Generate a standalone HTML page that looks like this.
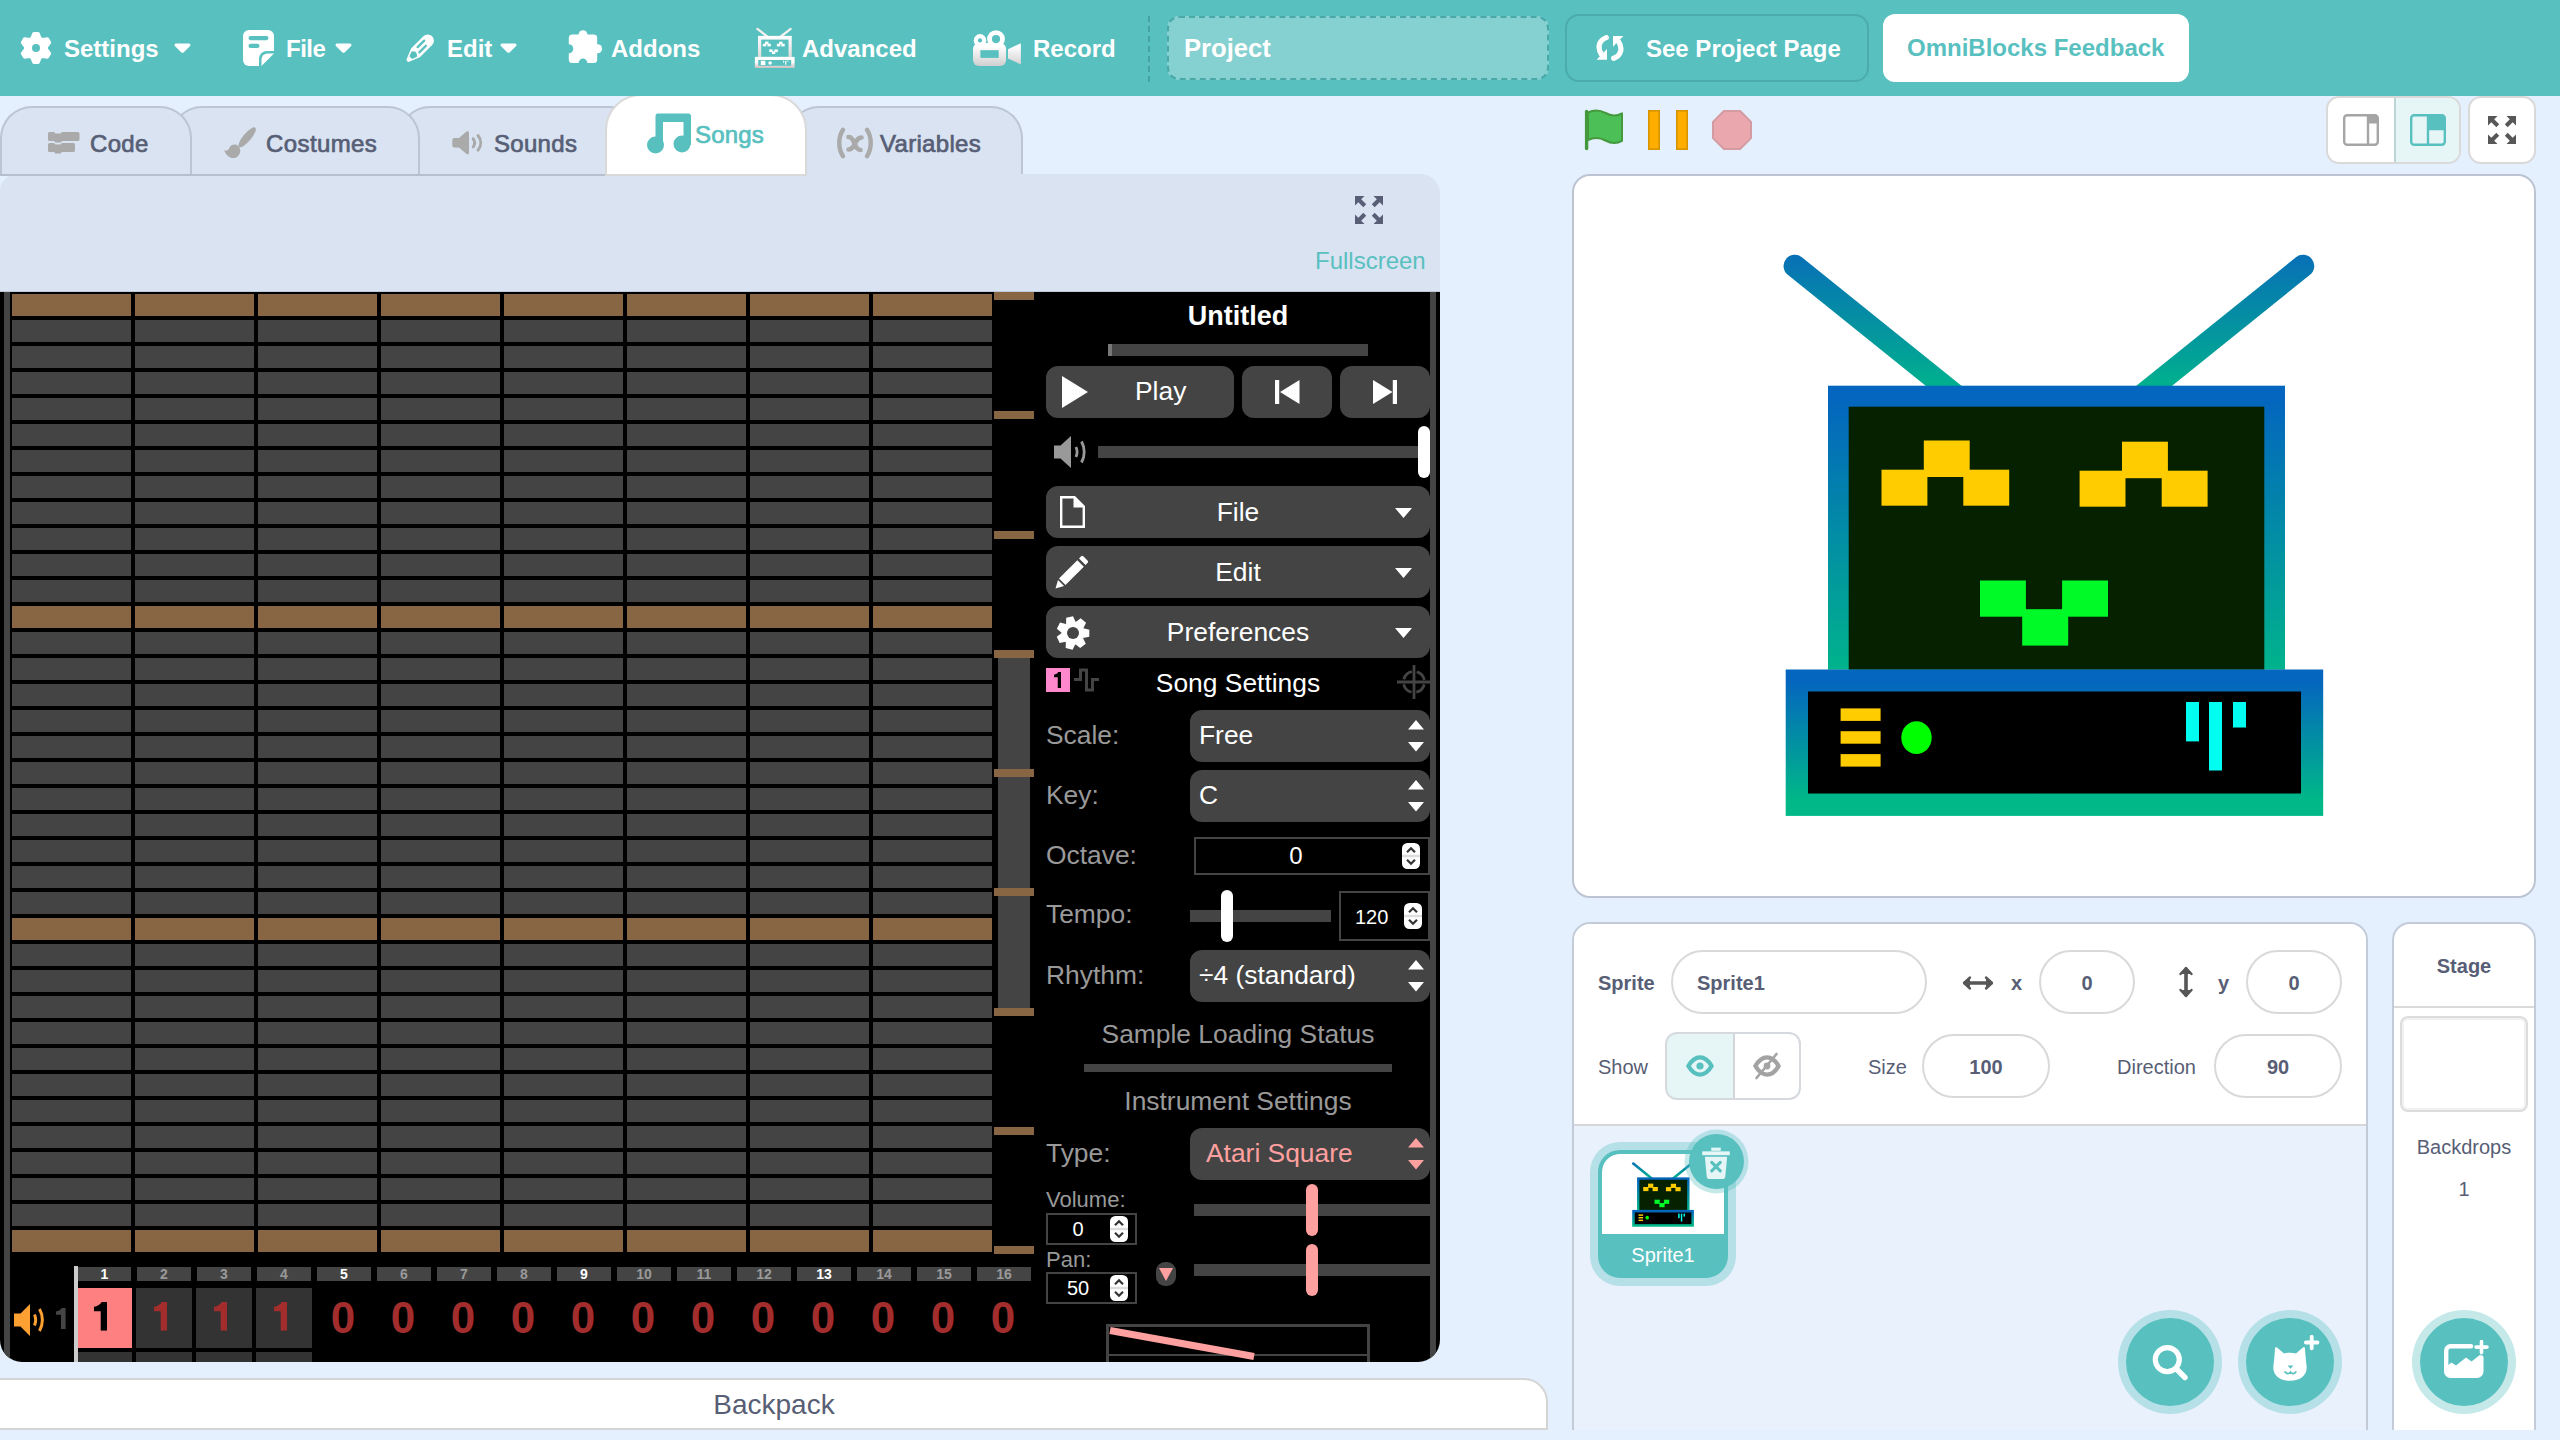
<!DOCTYPE html>
<html lang="en">
<head>
<meta charset="utf-8">
<title>OmniBlocks - Songs</title>
<style>
*{box-sizing:border-box;margin:0;padding:0}
html,body{width:2560px;height:1440px;overflow:hidden}
body{background:#e5f0ff;font-family:"Liberation Sans",sans-serif;color:#575e75;position:relative}
.a{position:absolute}
.t{position:absolute;white-space:nowrap;line-height:1}
.b{font-weight:bold}
.w{color:#fff}
.teal{color:#59c0c0}
/* ---------- menu bar ---------- */
#bar{left:0;top:0;width:2560px;height:96px;background:#59c0c0;z-index:5}
.mi{font-size:24px;font-weight:bold;color:#fff;top:37px}
/* ---------- tabs ---------- */
.tab{top:106px;height:68px;background:#d9e3f2;border:2px solid #bcc5d3;border-bottom:none;border-radius:32px 32px 0 0}
.tl{font-size:24px;top:132px;color:#575e75;-webkit-text-stroke:0.7px #575e75;letter-spacing:0.3px}
/* ---------- editor ---------- */
#edhead{left:0;top:174px;width:1440px;height:119px;background:#d9e3f2;border-radius:17px 20px 0 0}
#ed{left:0;top:292px;width:1440px;height:1070px;background:#000;border-radius:0 0 22px 22px;overflow:hidden}
#ed .a,#ed .t{position:absolute}
.btn{background:#444;border-radius:12px}
.lab{font-size:26.400px;color:#999}
.sel{background:#444;border-radius:12px;height:52px;left:1190px;width:240px}
.selt{font-size:26.400px;color:#fff}
.num{border:2px solid #444;background:#000}
.bn{top:975px;width:54px;height:14px;background:#444;font-size:14px;font-weight:bold;color:#999;text-align:center;line-height:15px}
.bn.h{color:#fff}
.pc{top:996px;width:56px;height:60px;font-size:44px;font-weight:bold;color:#a32d2d;text-align:center;line-height:59px;padding-right:2px}
.pc.d{background:#333}
.pc2{top:1060px;width:56px;height:12px;background:#333}
/* ---------- right side ---------- */
.pill{border:2px solid #d9d9d9;border-radius:32px;background:#fff;height:64px;font-size:24px;font-weight:bold;color:#575e75;text-align:center;line-height:62px}
.sl{font-size:24px;color:#575e75}
.circ{border-radius:50%;background:#59c0c0;box-shadow:0 0 0 8px rgba(89,192,192,.35)}
</style>
</head>
<body>

<!-- ================= MENU BAR ================= -->
<div id="bar" class="a">
  <!-- Settings -->
  <svg class="a" style="left:19px;top:31px" width="34" height="34" viewBox="-17 -17 34 34">
    <g fill="#fff">
      <circle r="11.900"/>
      <g id="tooth"><path d="M-5.700 -10L-3.600 -15.100Q-3.200 -16.100 -2.100 -16.100L2.100 -16.100Q3.200 -16.100 3.600 -15.100L5.700 -10Z"/></g>
      <use href="#tooth" transform="rotate(60)"/><use href="#tooth" transform="rotate(120)"/>
      <use href="#tooth" transform="rotate(180)"/><use href="#tooth" transform="rotate(240)"/><use href="#tooth" transform="rotate(300)"/>
    </g>
    <circle r="4" fill="#59c0c0"/>
  </svg>
  <div class="t mi" style="left:64px">Settings</div>
  <svg class="a" style="left:174px;top:43px" width="17" height="10" viewBox="0 0 17 10"><path d="M2 0.5h13a1.5 1.5 0 0 1 1.1 2.5l-6.3 6.2a1.9 1.9 0 0 1-2.6 0L0.9 3A1.5 1.5 0 0 1 2 .5z" fill="#fff"/></svg>

  <!-- File -->
  <svg class="a" style="left:243px;top:30px" width="31" height="36" viewBox="0 0 31 36">
    <path d="M6 0h19a6 6 0 0 1 6 6v17l-13 13H6a6 6 0 0 1-6-6V6a6 6 0 0 1 6-6z" fill="#fff"/>
    <path d="M31 21v4L20 36h-4v-7a8 8 0 0 1 8-8z" fill="#59c0c0"/>
    <path d="M31 23.500L18.500 36V29.500a6 6 0 0 1 6-6z" fill="#fff"/>
    <rect x="5.500" y="6" width="20" height="4.200" rx="2.100" fill="#59c0c0"/>
    <rect x="5.500" y="13.800" width="11" height="4.200" rx="2.100" fill="#59c0c0"/>
  </svg>
  <div class="t mi" style="left:286px;letter-spacing:-0.5px">File</div>
  <svg class="a" style="left:335px;top:43px" width="17" height="10" viewBox="0 0 17 10"><path d="M2 0.5h13a1.5 1.5 0 0 1 1.1 2.5l-6.3 6.2a1.9 1.9 0 0 1-2.6 0L0.9 3A1.5 1.5 0 0 1 2 .5z" fill="#fff"/></svg>

  <!-- Edit -->
  <svg class="a" style="left:400px;top:28px" width="40" height="40" viewBox="0 0 40 40">
    <g transform="translate(32.100 8.300) rotate(45)">
      <path d="M-6.200 6.200A6.200 6.200 0 0 1 6.200 6.200L6.200 23.500L2 33.800A2.100 2.100 0 0 1 -2 33.800L-6.200 23.500Z" fill="#fff"/>
      <rect x="-3.700" y="7.500" width="2.300" height="11.500" rx="1.100" fill="#59c0c0"/>
      <rect x="1.200" y="10" width="2.300" height="11.500" rx="1.100" fill="#59c0c0"/>
      <path d="M-3.800 25.200Q0 20.500 3.800 25.200L1.900 30.200L-1.900 30.200Z" fill="#59c0c0"/>
    </g>
  </svg>
  <div class="t mi" style="left:447px">Edit</div>
  <svg class="a" style="left:500px;top:43px" width="17" height="10" viewBox="0 0 17 10"><path d="M2 0.5h13a1.5 1.5 0 0 1 1.1 2.5l-6.3 6.2a1.9 1.9 0 0 1-2.6 0L0.900 3A1.5 1.5 0 0 1 2 .5z" fill="#fff"/></svg>

  <!-- Addons -->
  <svg class="a" style="left:567px;top:29px" width="37" height="37" viewBox="0 0 37 37">
    <g fill="#fff"><rect x="1.800" y="5.600" width="28.400" height="28.400" rx="3.500"/><circle cx="16" cy="5.600" r="4.400"/><circle cx="30.600" cy="19.800" r="4.500"/></g>
    <g fill="#59c0c0"><circle cx="1.800" cy="19.800" r="4.500"/><circle cx="16" cy="34" r="4.400"/></g>
  </svg>
  <div class="t mi" style="left:611px">Addons</div>

  <!-- Advanced -->
  <svg class="a" style="left:754.240px;top:25.600px" width="41.400" height="42.500" viewBox="1774 252 560 575">
    <defs>
      <linearGradient id="rg1" x1="0" y1="0" x2="0" y2="1"><stop offset="0" stop-color="#fff"/><stop offset="1" stop-color="#dedada"/></linearGradient>
      <linearGradient id="rg2" x1="0" y1="0" x2="0" y2="1"><stop offset="0" stop-color="#fff"/><stop offset=".45" stop-color="#fff"/><stop offset="1" stop-color="#c4b9b9"/></linearGradient>
    </defs>
    <g stroke="#f3f0f0" stroke-width="32" stroke-linecap="round" fill="none"><path d="M1819.500 291.200L1948 390"/><path d="M2270 291.200L2141.500 390"/></g>
    <rect x="1828" y="385.700" width="457" height="284" fill="url(#rg1)"/>
    <rect x="1872" y="436" width="369" height="234" fill="#59c0c0"/>
    <g fill="#fff"><rect x="1923.800" y="440.500" width="45.900" height="36.500" transform="translate(0 22)"/><rect x="1881.500" y="469.700" width="45.900" height="36" transform="translate(12 22)"/><rect x="1963.300" y="469.700" width="45.900" height="36" transform="translate(-8 22)"/><rect x="2122" y="441.700" width="45.900" height="36.500" transform="translate(-8 22)"/><rect x="2079.600" y="470.700" width="45.900" height="36" transform="translate(4 22)"/><rect x="2161.700" y="470.700" width="45.900" height="36" transform="translate(-18 22)"/></g>
    <g fill="#fff"><rect x="1980" y="580.500" width="45.900" height="36.200" transform="translate(0 -12)"/><rect x="2062.100" y="580.500" width="45.900" height="36.200" transform="translate(-12 -12)"/><rect x="2022.200" y="609.200" width="46" height="36.400" transform="translate(-6 -14)"/></g>
    <rect x="1785.700" y="669.500" width="537.500" height="158" fill="url(#rg2)"/>
    <rect x="1832" y="712" width="445" height="78" fill="#59c0c0"/>
    <g fill="#fff"><rect x="1866" y="722" width="62" height="58"/><circle cx="1992" cy="752" r="24"/><rect x="2168" y="722" width="14" height="26"/><rect x="2196" y="722" width="16" height="54"/><rect x="2226" y="722" width="14" height="16"/></g>
  </svg>
  <div class="t mi" style="left:802px">Advanced</div>

  <!-- Record -->
  <svg class="a" style="left:972px;top:29px" width="50" height="38" viewBox="0 0 50 38">
    <defs><linearGradient id="cg" gradientUnits="userSpaceOnUse" x1="0" y1="1" x2="0" y2="37"><stop offset="0" stop-color="#fff"/><stop offset=".45" stop-color="#fff"/><stop offset="1" stop-color="#cfcfcf"/></linearGradient></defs>
    <g fill="url(#cg)">
      <circle cx="8" cy="11.400" r="6.300"/><circle cx="24" cy="10.100" r="8.900"/>
      <rect x="1" y="14" width="33.100" height="23" rx="6"/>
      <path d="M36 20.200L48.900 14.200V35.400L36 29.500z"/>
    </g>
    <circle cx="8" cy="11.400" r="2.100" fill="#59c0c0"/><circle cx="24" cy="10.100" r="4.100" fill="#59c0c0"/>
    <rect x="8.400" y="21.200" width="18.300" height="7.700" fill="#59c0c0"/>
  </svg>
  <div class="t mi" style="left:1033px">Record</div>

  <!-- divider -->
  <div class="a" style="left:1148px;top:16px;width:0;height:66px;border-left:2px dashed #47a3a3"></div>

  <!-- Project title -->
  <div class="a" style="left:1167px;top:16px;width:382px;height:64px;background:#85d0d0;border:2px dashed #4aa8a8;border-radius:12px"></div>
  <div class="t b w" style="left:1184px;top:36px;font-size:25.600px">Project</div>

  <!-- See Project Page -->
  <div class="a" style="left:1565px;top:14px;width:304px;height:68px;border:2px solid #4cabab;border-radius:14px"></div>
  <svg class="a" style="left:1594px;top:35px" width="32" height="26" viewBox="0 0 32 26">
    <g id="rarr"><path d="M12.300 2.600C5.500 5 2.600 12 7.600 19.500" fill="none" stroke="#fff" stroke-width="5.200" stroke-linecap="round"/><path d="M2.600 24.800L13 24.800L13 14.100Z" fill="#fff"/></g>
    <use href="#rarr" transform="rotate(180 16 12.950)"/>
  </svg>
  <div class="t mi" style="left:1646px">See Project Page</div>

  <!-- Feedback -->
  <div class="a" style="left:1883px;top:14px;width:306px;height:68px;background:#fff;border-radius:12px"></div>
  <div class="t b teal" style="left:1907px;top:36px;font-size:24px">OmniBlocks Feedback</div>
</div>


<!-- ================= TABS ================= -->
<div id="tabs">
  <!-- bottom rule under tabs -->
  <!-- Variables (drawn first = lowest) -->
  <div class="a tab" style="left:787px;width:236px;height:70px"></div>
  <!-- Sounds -->
  <div class="a tab" style="left:398px;width:245px"></div>
  <!-- Costumes -->
  <div class="a tab" style="left:170px;width:250px"></div>
  <!-- Code -->
  <div class="a tab" style="left:0px;width:192px"></div>
  <div class="a" style="left:0;top:174px;width:606px;height:2px;background:#b7bfcd;z-index:2"></div>
  <!-- Songs (selected) -->
  <div class="a" style="left:605px;top:94px;width:202px;height:82px;background:#fff;border:2px solid #d9d9d9;border-radius:36px 36px 0 0;z-index:3"></div>

  <!-- Code icon -->
  <svg class="a" style="left:48px;top:132px" width="32" height="23" viewBox="0 0 32 23">
    <path fill="#aaaaaa" d="M1.500 0h4.500l1.500 1.500h5l1.500-1.500H30a1.500 1.500 0 0 1 1.500 1.500v6a1.500 1.500 0 0 1-1.500 1.500H14l-1.500 1.500h-5L6 9H1.500A1.500 1.500 0 0 1 0 7.500v-6A1.500 1.500 0 0 1 1.500 0z"/>
    <path fill="#aaaaaa" d="M1.500 11h4.500l1.500 1.500h5l1.500-1.500h11.500a1.500 1.500 0 0 1 1.500 1.500v6a1.500 1.500 0 0 1-1.500 1.500H14l-1.500 1.500h-5L6 20H1.500A1.500 1.500 0 0 1 0 18.500v-6A1.500 1.500 0 0 1 1.500 11z"/>
  </svg>
  <div class="t tl" style="left:90px">Code</div>

  <!-- Costumes icon (brush) -->
  <svg class="a" style="left:223px;top:126px" width="34" height="34" viewBox="0 0 34 34">
    <g fill="#aaaaaa"><ellipse cx="24.200" cy="11.300" rx="12.600" ry="4" transform="rotate(-50 24.200 11.300)"/>
    <path d="M1.200 24.300C4 25.300 5.600 24 6.600 21.500 8 18.300 12.200 17.400 15 19.800 18.200 22.500 18 27.600 14.600 30.600 10.500 34 3.400 31.500 1.200 24.300z"/></g>
  </svg>
  <div class="t tl" style="left:266px;letter-spacing:0.4px">Costumes</div>

  <!-- Sounds icon -->
  <svg class="a" style="left:452px;top:130px" width="32" height="27" viewBox="0 0 32 27">
    <path fill="#aaaaaa" d="M2.500 8h4.500L14.500 1.500c1-.8 2.500-.2 2.500 1.100v20.300c0 1.300-1.500 1.900-2.500 1.100L7 17.500H2.500a2.200 2.200 0 0 1-2.200-2.200v-5.100A2.200 2.200 0 0 1 2.500 8z"/>
    <path fill="none" stroke="#aaaaaa" stroke-width="3" stroke-linecap="round" d="M21.200 8.800c1.700 2.300 1.700 5.700 0 8M26 5.500c3.600 4.400 3.600 10.200 0 14.600"/>
  </svg>
  <div class="t tl" style="left:494px">Sounds</div>

  <!-- Songs icon -->
  <svg class="a" style="left:647px;top:113px;z-index:4" width="44" height="41" viewBox="0 0 44 41">
    <g fill="#59c0c0">
      <path d="M10.500 0h31a2.500 2.500 0 0 1 2.500 2.500v29h-7.500V8.500H16v23H8.500v-29A2.500 2.500 0 0 1 10.500 0z" transform="translate(0 0.500)"/>
      <circle cx="8.500" cy="32" r="8.500"/><circle cx="35" cy="31" r="8.500"/>
    </g>
  </svg>
  <div class="t" style="left:695px;top:123px;font-size:24px;color:#59c0c0;-webkit-text-stroke:0.7px #59c0c0;letter-spacing:0.2px;z-index:4">Songs</div>

  <!-- Variables icon -->
  <svg class="a" style="left:836px;top:126px" width="38" height="34" viewBox="0 0 38 34">
    <g fill="none" stroke="#aaaaaa" stroke-linecap="round">
      <path stroke-width="4.400" d="M7 3.800C2 11.500 2 22.500 7 30.200M31 3.800C36 11.500 36 22.500 31 30.200"/>
      <path stroke-width="4.500" d="M12.500 11c3 0 4 2 6 6.500s3 6.500 6 6.500M25.500 11.500c-3.500 0-4.500 2.500-6.500 6s-3 6-6.500 6"/>
    </g>
  </svg>
  <div class="t tl" style="left:880px">Variables</div>
</div>


<!-- ================= EDITOR ================= -->
<div id="edhead" class="a">
  <svg class="a" style="left:1354px;top:21px" width="30" height="30" viewBox="0 0 30 30">
    <g fill="#575e75">
      <path d="M1 1h9.500L7.200 4.300l5 5-2.900 2.900-5-5L1 10.500z"/>
      <path d="M29 1v9.500l-3.300-3.300-5 5-2.900-2.900 5-5L19.500 1z"/>
      <path d="M1 29v-9.500l3.300 3.300 5-5 2.900 2.900-5 5L10.500 29z"/>
      <path d="M29 29h-9.500l3.300-3.300-5-5 2.900-2.900 5 5 3.300-3.300z"/>
    </g>
  </svg>
  <div class="t" style="left:1315px;top:75px;font-size:24px;color:#59c0c0">Fullscreen</div>
  <div class="a" style="left:0;top:117px;width:1440px;height:1px;background:#bfc9d9"></div>
</div>

<div id="ed" class="a">
<div class="a" style="left:4px;top:0;width:6px;height:1070px;background:#444"></div>
<div class="a" style="left:1430px;top:0;width:6px;height:1070px;background:#444"></div>
<div class="a" style="left:12px;top:2px;width:980px;height:958px;background:#444">
<div class="a" style="left:0;top:0px;width:980px;height:22px;background:#886644"></div>
<div class="a" style="left:0;top:312px;width:980px;height:22px;background:#886644"></div>
<div class="a" style="left:0;top:624px;width:980px;height:22px;background:#886644"></div>
<div class="a" style="left:0;top:936px;width:980px;height:22px;background:#886644"></div>
<div class="a" style="left:0;top:0;width:984px;height:962px;background:repeating-linear-gradient(to right,transparent 0,transparent 119px,#000 119px,#000 123px),repeating-linear-gradient(to bottom,transparent 0,transparent 22px,#000 22px,#000 26px)"></div>
</div>
<div class="a" style="left:998px;top:358px;width:32px;height:366px;background:#444"></div>
<div class="a" style="left:994px;top:0.000px;width:40px;height:8px;background:#886644"></div>
<div class="a" style="left:994px;top:119.250px;width:40px;height:8px;background:#886644"></div>
<div class="a" style="left:994px;top:238.500px;width:40px;height:8px;background:#886644"></div>
<div class="a" style="left:994px;top:357.750px;width:40px;height:8px;background:#886644"></div>
<div class="a" style="left:994px;top:477.000px;width:40px;height:8px;background:#886644"></div>
<div class="a" style="left:994px;top:596.250px;width:40px;height:8px;background:#886644"></div>
<div class="a" style="left:994px;top:715.500px;width:40px;height:8px;background:#886644"></div>
<div class="a" style="left:994px;top:834.750px;width:40px;height:8px;background:#886644"></div>
<div class="a" style="left:994px;top:954.000px;width:40px;height:8px;background:#886644"></div>
<div class="a" style="left:74px;top:974px;width:4px;height:100px;background:#ccc"></div>
<div class="a bn h" style="left:78px;width:53px">1</div>
<div class="a bn" style="left:137px;width:54px">2</div>
<div class="a bn" style="left:197px;width:54px">3</div>
<div class="a bn" style="left:257px;width:54px">4</div>
<div class="a bn h" style="left:317px;width:54px">5</div>
<div class="a bn" style="left:377px;width:54px">6</div>
<div class="a bn" style="left:437px;width:54px">7</div>
<div class="a bn" style="left:497px;width:54px">8</div>
<div class="a bn h" style="left:557px;width:54px">9</div>
<div class="a bn" style="left:617px;width:54px">10</div>
<div class="a bn" style="left:677px;width:54px">11</div>
<div class="a bn" style="left:737px;width:54px">12</div>
<div class="a bn h" style="left:797px;width:54px">13</div>
<div class="a bn" style="left:857px;width:54px">14</div>
<div class="a bn" style="left:917px;width:54px">15</div>
<div class="a bn" style="left:977px;width:54px">16</div>
<svg width="0" height="0" style="position:absolute"><symbol id="one" viewBox="0 0 13.100 28.700"><path d="M13.100 0V28.700H6.700V9.200H0V4.800C3.700 4.300 6.200 2.300 7.700 0Z"/></symbol></svg>
<div class="a pc" style="left:78px;width:54px;background:#ff8080"></div>
<svg class="a" style="left:94.3px;top:1010.200px" width="13.100" height="28.700" fill="#000"><use href="#one"/></svg>
<div class="a pc d" style="left:136px"></div>
<svg class="a" style="left:154.3px;top:1010.200px" width="13.100" height="28.700" fill="#a32d2d"><use href="#one"/></svg>
<div class="a pc d" style="left:196px"></div>
<svg class="a" style="left:214.3px;top:1010.200px" width="13.100" height="28.700" fill="#a32d2d"><use href="#one"/></svg>
<div class="a pc d" style="left:256px"></div>
<svg class="a" style="left:274.3px;top:1010.200px" width="13.100" height="28.700" fill="#a32d2d"><use href="#one"/></svg>
<div class="a pc" style="left:316px">0</div>
<div class="a pc" style="left:376px">0</div>
<div class="a pc" style="left:436px">0</div>
<div class="a pc" style="left:496px">0</div>
<div class="a pc" style="left:556px">0</div>
<div class="a pc" style="left:616px">0</div>
<div class="a pc" style="left:676px">0</div>
<div class="a pc" style="left:736px">0</div>
<div class="a pc" style="left:796px">0</div>
<div class="a pc" style="left:856px">0</div>
<div class="a pc" style="left:916px">0</div>
<div class="a pc" style="left:976px">0</div>
<div class="a pc2" style="left:78px;width:54px"></div>
<div class="a pc2" style="left:136px;width:56px"></div>
<div class="a pc2" style="left:196px;width:56px"></div>
<div class="a pc2" style="left:256px;width:56px"></div>
<svg class="a" style="left:13px;top:1011px" width="34" height="34" viewBox="0 0 34 34">
<path fill="#ffa033" d="M1 10.500h6.500L17 1v32l-9.500-9.500H1z"/>
<path fill="none" stroke="#ffa033" stroke-width="3" d="M21.500 11.500c1.500 3.500 1.500 7.500 0 11M26.500 6c3.800 6.500 3.800 15.500 0 22"/>
</svg>
<svg class="a" style="left:55.800px;top:1016px" width="9.800" height="21.400" fill="#444"><use href="#one"/></svg>
<div class="t b w" style="left:1046px;width:384px;text-align:center;top:10.500px;font-size:27px">Untitled</div>
<div class="a" style="left:1108px;top:52px;width:260px;height:12px;background:#444"></div>
<div class="a" style="left:1108px;top:52px;width:4px;height:12px;background:#777"></div>
<div class="a btn" style="left:1046px;top:74px;width:188px;height:52px"></div>
<div class="a btn" style="left:1242px;top:74px;width:90px;height:52px"></div>
<div class="a btn" style="left:1340px;top:74px;width:90px;height:52px"></div>
<svg class="a" style="left:1046px;top:74px" width="384" height="52" viewBox="0 0 384 52"><g fill="#fff"><path d="M16 10v32l26-16z"/><rect x="229" y="14" width="4.200" height="24"/><path d="M253.500 14v24L234 26z"/><path d="M327 14v24l19.500-12z"/><rect x="346.800" y="14" width="4.200" height="24"/></g></svg>
<div class="t w" style="left:1135px;top:86px;font-size:26.400px">Play</div>
<svg class="a" style="left:1053px;top:143px" width="36" height="34" viewBox="0 0 36 34">
<path fill="#999" d="M1 10.500h6.500L18 1v32L7.500 23.500H1z"/>
<path fill="none" stroke="#999" stroke-width="2.800" d="M23 12c1.400 3.200 1.400 6.800 0 10M28.500 6.500c3.600 6.300 3.600 14.700 0 21"/>
</svg>
<div class="a" style="left:1098px;top:154px;width:332px;height:12px;background:#444"></div>
<div class="a" style="left:1418px;top:134px;width:12px;height:52px;background:#fff;border-radius:6px"></div>
<div class="a btn" style="left:1046px;top:194px;width:384px;height:52px"></div>
<div class="t w" style="left:1046px;width:384px;text-align:center;top:207px;font-size:26.400px">File</div>
<svg class="a" style="left:1395px;top:216px" width="17" height="10" viewBox="0 0 17 10"><path d="M0 0h17L8.500 10z" fill="#fff"/></svg>
<div class="a btn" style="left:1046px;top:254px;width:384px;height:52px"></div>
<div class="t w" style="left:1046px;width:384px;text-align:center;top:267px;font-size:26.400px">Edit</div>
<svg class="a" style="left:1395px;top:276px" width="17" height="10" viewBox="0 0 17 10"><path d="M0 0h17L8.500 10z" fill="#fff"/></svg>
<div class="a btn" style="left:1046px;top:314px;width:384px;height:52px"></div>
<div class="t w" style="left:1046px;width:384px;text-align:center;top:327px;font-size:26.400px">Preferences</div>
<svg class="a" style="left:1395px;top:336px" width="17" height="10" viewBox="0 0 17 10"><path d="M0 0h17L8.500 10z" fill="#fff"/></svg>
<svg class="a" style="left:1059px;top:203px" width="27" height="34" viewBox="0 0 27 34"><path d="M2.200 2.200h13.300l9.300 9.300v20.300H2.200z" fill="none" stroke="#fff" stroke-width="2.400"/><path d="M14.500 1.500l11 11h-11z" fill="#fff"/></svg>
<svg class="a" style="left:1055px;top:263px" width="34" height="34" viewBox="0 0 34 34"><g fill="#fff"><path d="M22.300 5.200l6.500 6.500L10.500 30 4 23.500z"/><path d="M24 3.500l2.200-2.200a1.500 1.500 0 0 1 2.100 0l4.400 4.400a1.500 1.500 0 0 1 0 2.100l-2.200 2.200z"/><path d="M3 25l6 6-8.500 2.500z"/></g></svg>
<svg class="a" style="left:1056px;top:324px" width="34" height="34" viewBox="-17 -17 34 34"><g fill="#fff"><circle r="11.500"/><path d="M-3.500 -16.300h7l1.400 6h-9.800z" transform="rotate(-12.00)"/><path d="M-3.500 -16.300h7l1.400 6h-9.800z" transform="rotate(39.43)"/><path d="M-3.500 -16.300h7l1.400 6h-9.800z" transform="rotate(90.86)"/><path d="M-3.500 -16.300h7l1.400 6h-9.800z" transform="rotate(142.29)"/><path d="M-3.500 -16.300h7l1.400 6h-9.800z" transform="rotate(193.71)"/><path d="M-3.500 -16.300h7l1.400 6h-9.800z" transform="rotate(245.14)"/><path d="M-3.500 -16.300h7l1.400 6h-9.800z" transform="rotate(296.57)"/></g><circle r="6" fill="#444"/></svg>
<div class="a" style="left:1046px;top:376px;width:24px;height:24px;background:#ff88cc"></div>
<svg class="a" style="left:1053.500px;top:380px" width="7.300" height="16" fill="#000"><use href="#one"/></svg>
<svg class="a" style="left:1074px;top:376px" width="25" height="24" viewBox="0 0 25 24"><path d="M0 11.500h6.500V2h6v20h6v-10.500H25" fill="none" stroke="#444" stroke-width="3"/></svg>
<div class="t w" style="left:1046px;width:384px;text-align:center;top:378px;font-size:26.400px">Song Settings</div>
<svg class="a" style="left:1397px;top:373px" width="34" height="34" viewBox="0 0 34 34"><g fill="none" stroke="#444" stroke-width="2.800"><circle cx="17" cy="17" r="10.500" stroke-dasharray="11.500 5" stroke-dashoffset="-2.500"/><path d="M17 0v34M0 17h34"/></g></svg>
<div class="t lab" style="left:1046px;top:430px">Scale:</div>
<div class="a sel" style="top:418px"></div>
<div class="t selt" style="left:1199px;top:430px;color:#fff">Free</div>
<svg class="a" style="left:1408px;top:428px" width="16" height="32" viewBox="0 0 16 32"><path d="M8 0l8 9.500H0zM0 22h16L8 31.500z" fill="#fff"/></svg>
<div class="t lab" style="left:1046px;top:490px">Key:</div>
<div class="a sel" style="top:478px"></div>
<div class="t selt" style="left:1199px;top:490px;color:#fff">C</div>
<svg class="a" style="left:1408px;top:488px" width="16" height="32" viewBox="0 0 16 32"><path d="M8 0l8 9.500H0zM0 22h16L8 31.500z" fill="#fff"/></svg>
<div class="t lab" style="left:1046px;top:550px">Octave:</div>
<div class="a num" style="left:1194px;top:545px;width:236px;height:38px"></div>
<div class="t w" style="left:1196px;width:200px;text-align:center;top:552px;font-size:24px">0</div>
<svg class="a" style="left:1402px;top:551px" width="18" height="26" viewBox="0 0 18 26"><rect width="18" height="26" rx="5.500" fill="#fff"/><rect y="11.800" width="18" height="2.400" fill="#ddd"/><path d="M5 9.200l4-4 4 4M5 16.800l4 4 4-4" fill="none" stroke="#333" stroke-width="2.200"/></svg>
<div class="t lab" style="left:1046px;top:609px">Tempo:</div>
<div class="a" style="left:1190px;top:618px;width:141px;height:12px;background:#444"></div>
<div class="a" style="left:1221px;top:598px;width:12px;height:52px;background:#fff;border-radius:6px"></div>
<div class="a num" style="left:1339px;top:599px;width:91px;height:50px"></div>
<div class="t w" style="left:1355px;top:615px;font-size:20px">120</div>
<svg class="a" style="left:1404px;top:611px" width="18" height="26" viewBox="0 0 18 26"><rect width="18" height="26" rx="5.500" fill="#fff"/><rect y="11.800" width="18" height="2.400" fill="#ddd"/><path d="M5 9.200l4-4 4 4M5 16.800l4 4 4-4" fill="none" stroke="#333" stroke-width="2.200"/></svg>
<div class="t lab" style="left:1046px;top:670px">Rhythm:</div>
<div class="a sel" style="top:658px"></div>
<div class="t selt" style="left:1199px;top:670px;color:#fff">÷4 (standard)</div>
<svg class="a" style="left:1408px;top:668px" width="16" height="32" viewBox="0 0 16 32"><path d="M8 0l8 9.500H0zM0 22h16L8 31.500z" fill="#fff"/></svg>
<div class="t lab" style="left:1046px;width:384px;text-align:center;top:729px">Sample Loading Status</div>
<div class="a" style="left:1084px;top:772px;width:308px;height:8px;background:#444"></div>
<div class="t lab" style="left:1046px;width:384px;text-align:center;top:796px">Instrument Settings</div>
<div class="t lab" style="left:1046px;top:848px">Type:</div>
<div class="a sel" style="top:836px"></div>
<div class="t selt" style="left:1206px;top:848px;color:#ffa0a0">Atari Square</div>
<svg class="a" style="left:1408px;top:846px" width="16" height="32" viewBox="0 0 16 32"><path d="M8 0l8 9.500H0zM0 22h16L8 31.500z" fill="#ffa0a0"/></svg>
<div class="t" style="left:1046px;top:897px;font-size:22px;color:#999">Volume:</div>
<div class="a num" style="left:1046px;top:921px;width:91px;height:32px"></div>
<div class="t w" style="left:1048px;width:60px;text-align:center;top:927px;font-size:20px">0</div>
<svg class="a" style="left:1110px;top:924px" width="18" height="26" viewBox="0 0 18 26"><rect width="18" height="26" rx="5.500" fill="#fff"/><rect y="11.800" width="18" height="2.400" fill="#ddd"/><path d="M5 9.200l4-4 4 4M5 16.800l4 4 4-4" fill="none" stroke="#333" stroke-width="2.200"/></svg>
<div class="a" style="left:1194px;top:912px;width:242px;height:12px;background:#444"></div>
<div class="a" style="left:1306px;top:892px;width:12px;height:52px;background:#ffa0a0;border-radius:6px"></div>
<div class="t" style="left:1046px;top:957px;font-size:22px;color:#999">Pan:</div>
<div class="a num" style="left:1046px;top:980px;width:91px;height:32px"></div>
<div class="t w" style="left:1048px;width:60px;text-align:center;top:986px;font-size:20px">50</div>
<svg class="a" style="left:1110px;top:983px" width="18" height="26" viewBox="0 0 18 26"><rect width="18" height="26" rx="5.500" fill="#fff"/><rect y="11.800" width="18" height="2.400" fill="#ddd"/><path d="M5 9.200l4-4 4 4M5 16.800l4 4 4-4" fill="none" stroke="#333" stroke-width="2.200"/></svg>
<div class="a" style="left:1156px;top:970px;width:20px;height:24px;background:#444;border-radius:9px"></div>
<svg class="a" style="left:1159px;top:976px" width="14" height="13" viewBox="0 0 14 13"><path d="M0 0h14L7 13z" fill="#ffa0a0"/></svg>
<div class="a" style="left:1194px;top:972px;width:242px;height:12px;background:#444"></div>
<div class="a" style="left:1306px;top:952px;width:12px;height:52px;background:#ffa0a0;border-radius:6px"></div>
<div class="a" style="left:1106px;top:1032px;width:264px;height:60px;border:3px solid #444"></div>
<div class="a" style="left:1109px;top:1062px;width:258px;height:2px;background:#444"></div>
<svg class="a" style="left:1106px;top:1032px" width="264" height="40" viewBox="0 0 264 40"><path d="M4 6.500L148 32.500" stroke="#ffa0a0" stroke-width="7" fill="none"/></svg>
</div>

<!-- ================= STAGE ================= -->
<div id="stagewrap">
  <!-- green flag / pause / stop -->
  <svg class="a" style="left:1582px;top:107px" width="176" height="46" viewBox="1582 107 176 46">
    <path d="M1588 112.500c6-3 11.500-2.800 17.500 .500s11 3.500 16.500 .300v27.500c-5.500 3.200-10.500 3-16.500-.300s-11.500-3.500-17.500-.500z" fill="#4cbf56" stroke="#45993d" stroke-width="2" stroke-linejoin="round"/>
    <path d="M1586.600 111.500v37" stroke="#45993d" stroke-width="3.400" stroke-linecap="round"/>
    <rect x="1648.800" y="110.800" width="10.400" height="38.400" fill="#ffae00" stroke="#d89400" stroke-width="1.600"/>
    <rect x="1676.800" y="110.800" width="10.400" height="38.400" fill="#ffae00" stroke="#d89400" stroke-width="1.600"/>
    <path d="M1723.900 111h16.200l10.900 10.900v16.200l-10.900 10.900h-16.200l-10.900-10.900v-16.200z" fill="#eaa8ae" stroke="#d59ba3" stroke-width="2" stroke-linejoin="round"/>
  </svg>

  <!-- layout buttons -->
  <div class="a" style="left:2326px;top:96px;width:135px;height:68px;background:#fff;border:2px solid #d9d9d9;border-radius:13px;overflow:hidden">
    <div class="a" style="left:66px;top:-2px;width:69px;height:68px;background:#e6f5f5;border:2px solid #bfd4d4;border-radius:0 13px 13px 0"></div>
  </div>
  <svg class="a" style="left:2342px;top:113px" width="38" height="34" viewBox="0 0 38 34">
    <rect x="2.200" y="2.200" width="33.600" height="29.600" rx="3" fill="#fff" stroke="#a5a5a5" stroke-width="2.400"/>
    <path d="M26 2.200v29.600" stroke="#a5a5a5" stroke-width="2.400"/>
    <path d="M26 2.200h6.800a3 3 0 0 1 3 3v5.300H26z" fill="#a5a5a5"/>
  </svg>
  <svg class="a" style="left:2409px;top:113px" width="38" height="34" viewBox="0 0 38 34">
    <rect x="2.200" y="2.200" width="33.600" height="29.600" rx="3" fill="#e6f5f5" stroke="#59c0c0" stroke-width="2.400"/>
    <path d="M19 2.200v29.600M19 16h16.800" stroke="#59c0c0" stroke-width="2.400"/>
    <path d="M19 2.200h13.800a3 3 0 0 1 3 3V16H19z" fill="#59c0c0"/>
  </svg>
  <div class="a" style="left:2468px;top:96px;width:68px;height:68px;background:#fff;border:2px solid #d9d9d9;border-radius:13px"></div>
  <svg class="a" style="left:2487px;top:115px" width="30" height="30" viewBox="0 0 30 30">
    <g fill="#575757">
      <path d="M1 1h9.500L7.200 4.300l5 5-2.900 2.900-5-5L1 10.500z"/>
      <path d="M29 1v9.500l-3.300-3.300-5 5-2.900-2.900 5-5L19.500 1z"/>
      <path d="M1 29v-9.500l3.300 3.300 5-5 2.900 2.900-5 5L10.500 29z"/>
      <path d="M29 29h-9.500l3.300-3.300-5-5 2.900-2.900 5 5 3.300-3.300z"/>
    </g>
  </svg>

  <!-- stage -->
  <div class="a" style="left:1572px;top:174px;width:964px;height:724px;background:#fff;border:2px solid #bcc4d2;border-radius:18px"></div>
  <svg class="a" style="left:1574px;top:176px" width="960" height="720" viewBox="1574 176 960 720">
    <defs>
      <linearGradient id="ga" gradientUnits="userSpaceOnUse" x1="0" y1="256" x2="0" y2="392"><stop offset="0" stop-color="#0870b6"/><stop offset="1" stop-color="#00b38c"/></linearGradient>
      <linearGradient id="gs" gradientUnits="userSpaceOnUse" x1="0" y1="400" x2="0" y2="669"><stop offset="0" stop-color="#0466be"/><stop offset="1" stop-color="#00b38c"/></linearGradient>
      <linearGradient id="gb" gradientUnits="userSpaceOnUse" x1="0" y1="682" x2="0" y2="800"><stop offset="0" stop-color="#0466be"/><stop offset="1" stop-color="#00b888"/></linearGradient>
    </defs>
    <g stroke="url(#ga)" stroke-width="22.500" stroke-linecap="round" fill="none">
      <path d="M1794.800 266L1956 395.700"/>
      <path d="M2303 266L2141.800 395.700"/>
    </g>
    <rect x="1828" y="385.700" width="457" height="284" fill="url(#gs)"/>
    <rect x="1848.700" y="406.700" width="415.600" height="263" fill="#052100"/>
    <g fill="#ffcc00">
      <rect x="1923.800" y="440.500" width="45.900" height="36.500"/><rect x="1881.500" y="469.700" width="45.900" height="36"/><rect x="1963.300" y="469.700" width="45.900" height="36"/>
      <rect x="2122" y="441.700" width="45.900" height="36.500"/><rect x="2079.600" y="470.700" width="45.900" height="36"/><rect x="2161.700" y="470.700" width="45.900" height="36"/>
    </g>
    <g fill="#00fa28">
      <rect x="1980" y="580.500" width="45.900" height="36.200"/><rect x="2062.100" y="580.500" width="45.900" height="36.200"/><rect x="2022.200" y="609.200" width="46" height="36.400"/>
    </g>
    <rect x="1785.700" y="669.500" width="537.500" height="146.400" fill="url(#gb)"/>
    <rect x="1808" y="691.500" width="493" height="102" fill="#000"/>
    <g fill="#ffcc00"><rect x="1840.600" y="708.400" width="40" height="12.500"/><rect x="1840.600" y="731.200" width="40" height="12.500"/><rect x="1840.600" y="754.100" width="40" height="12.500"/></g>
    <ellipse cx="1916.500" cy="737.600" rx="15.200" ry="16.400" fill="#00ff00"/>
    <g fill="#00fff0"><rect x="2186" y="702" width="13" height="39.400"/><rect x="2209" y="702" width="13" height="68.500"/><rect x="2233" y="702" width="13" height="25.500"/></g>
  </svg>
</div>


<!-- ================= SPRITES ================= -->
<div id="sprites">
  <!-- sprite pane -->
  <div class="a" style="left:1572px;top:922px;width:796px;height:508px;background:#e9f1fc;border:2px solid #c3cbd9;border-bottom:none;border-radius:18px 18px 0 0;overflow:hidden">
    <div class="a" style="left:0;top:0;width:792px;height:202px;background:#fff;border-bottom:2px solid #d6d6d6"></div>
  </div>
  <div class="t b" style="left:1598px;top:973px;font-size:20px;color:#575e75">Sprite</div>
  <div class="a pill" style="left:1671px;top:950px;width:256px;text-align:left;padding-left:24px;font-size:20px">Sprite1</div>
  <svg class="a" style="left:1961px;top:973px" width="34" height="20" viewBox="0 0 34 20"><g fill="none" stroke="#575757" stroke-width="3.600" stroke-linecap="round" stroke-linejoin="round"><path d="M4 10h26"/><path d="M9 4.500L3 10l6 5.500M25 4.500l6 5.500-6 5.500" fill="#575757" stroke-width="2.400"/></g></svg>
  <div class="t b" style="left:2011px;top:973px;font-size:20px">x</div>
  <div class="a pill" style="left:2039px;top:950px;width:96px;font-size:20px">0</div>
  <svg class="a" style="left:2175px;top:965px" width="22" height="34" viewBox="0 0 22 34"><g fill="none" stroke="#575757" stroke-width="3.600" stroke-linecap="round" stroke-linejoin="round"><path d="M11 4v26"/><path d="M5.500 9L11 3l5.500 6M5.500 25l5.500 6 5.500-6" fill="#575757" stroke-width="2.400"/></g></svg>
  <div class="t b" style="left:2218px;top:973px;font-size:20px">y</div>
  <div class="a pill" style="left:2246px;top:950px;width:96px;font-size:20px">0</div>

  <div class="t" style="left:1598px;top:1057px;font-size:20px">Show</div>
  <div class="a" style="left:1665px;top:1032px;width:136px;height:68px;background:#fff;border:2px solid #d6d9de;border-radius:12px;overflow:hidden">
    <div class="a" style="left:-2px;top:-2px;width:70px;height:68px;background:#e6f5f5;border:2px solid #a9d9d9;border-right-color:#d2d5da;border-radius:12px 0 0 12px"></div>
  </div>
  <svg class="a" style="left:1686px;top:1055px" width="28" height="22" viewBox="0 0 28 22"><path d="M2.400 11C6 4.800 10 2.400 14 2.400S22 4.800 25.600 11C22 17.200 18 19.600 14 19.600S6 17.200 2.400 11z" fill="none" stroke="#59c0c0" stroke-width="4.400" stroke-linejoin="round"/><circle cx="14" cy="11" r="3.600" fill="#59c0c0"/></svg>
  <svg class="a" style="left:1752px;top:1052px" width="30" height="28" viewBox="0 0 30 28"><g fill="none" stroke="#a3a3a3"><path d="M3.400 14C7 7.800 11 5.400 15 5.400S23 7.800 26.600 14C23 20.200 19 22.600 15 22.600S7 20.200 3.400 14z" stroke-width="4.400" stroke-linejoin="round"/><path d="M24.500 2L4.500 26" stroke-width="2.600" stroke-linecap="round"/></g><circle cx="15" cy="14" r="3.400" fill="#a3a3a3"/></svg>
  <div class="t" style="left:1868px;top:1057px;font-size:20px">Size</div>
  <div class="a pill" style="left:1922px;top:1034px;width:128px;font-size:20px">100</div>
  <div class="t" style="left:2117px;top:1057px;font-size:20px">Direction</div>
  <div class="a pill" style="left:2214px;top:1034px;width:128px;font-size:20px">90</div>

  <!-- sprite tile -->
  <div class="a" style="left:1598px;top:1150px;width:130px;height:128px;background:#59c0c0;border:4px solid #59c0c0;border-radius:22px;box-shadow:0 0 0 8px rgba(89,192,192,.35);overflow:hidden">
    <div class="a" style="left:0;top:0;width:122px;height:80px;background:#fff;border-radius:17px 17px 0 0"></div>
  </div>
  <svg class="a" style="left:1630px;top:1162px" width="66" height="66" viewBox="1774 252 560 575">
    <defs>
      <linearGradient id="ga2" gradientUnits="userSpaceOnUse" x1="0" y1="256" x2="0" y2="392"><stop offset="0" stop-color="#0870b6"/><stop offset="1" stop-color="#00b38c"/></linearGradient>
      <linearGradient id="gs2" gradientUnits="userSpaceOnUse" x1="0" y1="400" x2="0" y2="669"><stop offset="0" stop-color="#0466be"/><stop offset="1" stop-color="#00b38c"/></linearGradient>
      <linearGradient id="gb2" gradientUnits="userSpaceOnUse" x1="0" y1="682" x2="0" y2="800"><stop offset="0" stop-color="#0466be"/><stop offset="1" stop-color="#00b888"/></linearGradient>
    </defs>
    <g stroke="url(#ga2)" stroke-width="22.500" stroke-linecap="round" fill="none"><path d="M1794.800 266L1956 395.700"/><path d="M2303 266L2141.800 395.700"/></g>
    <rect x="1828" y="385.700" width="457" height="284" fill="url(#gs2)"/>
    <rect x="1848.700" y="406.700" width="415.600" height="263" fill="#052100"/>
    <g fill="#ffcc00"><rect x="1923.800" y="440.500" width="45.900" height="36.500"/><rect x="1881.500" y="469.700" width="45.900" height="36"/><rect x="1963.300" y="469.700" width="45.900" height="36"/><rect x="2122" y="441.700" width="45.900" height="36.500"/><rect x="2079.600" y="470.700" width="45.900" height="36"/><rect x="2161.700" y="470.700" width="45.900" height="36"/></g>
    <g fill="#00fa28"><rect x="1980" y="580.500" width="45.900" height="36.200"/><rect x="2062.100" y="580.500" width="45.900" height="36.200"/><rect x="2022.200" y="609.200" width="46" height="36.400"/></g>
    <rect x="1785.700" y="669.500" width="537.500" height="146.400" fill="url(#gb2)"/>
    <rect x="1808" y="691.500" width="493" height="102" fill="#000"/>
    <g fill="#ffcc00"><rect x="1840.600" y="708.400" width="40" height="12.500"/><rect x="1840.600" y="731.200" width="40" height="12.500"/><rect x="1840.600" y="754.100" width="40" height="12.500"/></g>
    <ellipse cx="1916.500" cy="737.600" rx="15.200" ry="16.400" fill="#00ff00"/>
    <g fill="#00fff0"><rect x="2186" y="702" width="13" height="39.400"/><rect x="2209" y="702" width="13" height="68.500"/><rect x="2233" y="702" width="13" height="25.500"/></g>
  </svg>
  <div class="t w" style="left:1598px;width:130px;text-align:center;top:1245px;font-size:20px">Sprite1</div>
  <!-- delete button -->
  <div class="a circ" style="left:1688.500px;top:1134px;width:55px;height:55px;box-shadow:0 0 0 4.500px rgba(89,192,192,.35)"></div>
  <svg class="a" style="left:1700px;top:1145px" width="32" height="36" viewBox="0 0 30 34">
    <g fill="#e6f6f6">
      <path d="M2 6h26v3.600H2z"/><path d="M10.500 2.500h9v3h-9z"/>
      <path d="M4.500 11h21l-1.700 18.500a3 3 0 0 1-3 2.700H9.200a3 3 0 0 1-3-2.700z"/>
    </g>
    <path d="M11 16.500l8 8M19 16.500l-8 8" stroke="#59c0c0" stroke-width="3" stroke-linecap="round"/>
  </svg>

  <!-- action buttons -->
  <div class="a circ" style="left:2126px;top:1318px;width:88px;height:88px"></div>
  <svg class="a" style="left:2150px;top:1342px" width="40" height="40" viewBox="0 0 40 40"><circle cx="17.300" cy="17.600" r="12" fill="none" stroke="#fff" stroke-width="5.200"/><path d="M26.500 27l8.500 8.500" stroke="#fff" stroke-width="5.400" stroke-linecap="round"/></svg>
  <div class="a circ" style="left:2246px;top:1318px;width:88px;height:88px"></div>
  <svg class="a" style="left:2270px;top:1335px" width="50" height="52" viewBox="0 0 50 52">
    <path fill="#fff" d="M5 13.500c0-1.200 1.200-1.700 2.100-1L14 18.600c4-1.300 8-1.300 12 0l6.900-6.100c.9-.7 2.100-.2 2.100 1 .3 5.500.9 11.500 1.600 17.500.8 9-6 14.700-16.600 14.700S2.600 40 3.400 31C4.100 25 4.700 19 5 13.500z"/>
    <path d="M17.600 30.600h5.800l-2.900 3.200z" fill="#59c0c0"/>
    <path d="M15.200 37c1.600 2.100 4 2.100 5.300.2 1.300 1.900 3.700 1.900 5.300-.2" fill="none" stroke="#59c0c0" stroke-width="1.900" stroke-linecap="round"/>
    <path d="M41.700 1.700v11.600M35.900 7.500h11.600" stroke="#fff" stroke-width="3.800" stroke-linecap="round"/>
  </svg>

  <!-- stage selector -->
  <div class="a" style="left:2392px;top:922px;width:144px;height:508px;background:#fff;border:2px solid #c3cbd9;border-bottom:none;border-radius:18px 18px 0 0"></div>
  <div class="t b" style="left:2394px;width:140px;text-align:center;top:956px;font-size:20px">Stage</div>
  <div class="a" style="left:2394px;top:1006px;width:140px;height:2px;background:#dadada"></div>
  <div class="a" style="left:2400px;top:1016px;width:128px;height:96px;background:#fff;border:2px solid #dcdcdc;border-radius:8px;box-shadow:inset 0 0 0 2px #f0f0f0"></div>
  <div class="t" style="left:2394px;width:140px;text-align:center;top:1137px;font-size:20px">Backdrops</div>
  <div class="t" style="left:2394px;width:140px;text-align:center;top:1179px;font-size:20px">1</div>
  <div class="a circ" style="left:2420px;top:1318px;width:88px;height:88px"></div>
  <svg class="a" style="left:2440px;top:1338px" width="50" height="46" viewBox="0 0 50 46">
    <path d="M31 8.200H10.500a4.300 4.300 0 0 0-4.300 4.300V33.500a4.300 4.300 0 0 0 4.300 4.300H37a4.300 4.300 0 0 0 4.300-4.300V19.500" fill="none" stroke="#fff" stroke-width="4.400" stroke-linecap="round"/>
    <path d="M7 28l4.500-3.500 4.500 3L26 19.500l5.500 4 9-7V37H7z" fill="#fff"/>
    <path d="M41.500 3.600v11M36 9.100h11" stroke="#fff" stroke-width="3.600" stroke-linecap="round"/>
  </svg>
</div>


<!-- ================= BACKPACK ================= -->
<div class="a" style="left:-2px;top:1378px;width:1550px;height:52px;background:#fff;border:2px solid #d4d4d4;border-radius:0 24px 0 0"></div>
<div class="t" style="left:0;width:1548px;text-align:center;top:1391px;font-size:28px;color:#575e75">Backpack</div>

</body>
</html>
